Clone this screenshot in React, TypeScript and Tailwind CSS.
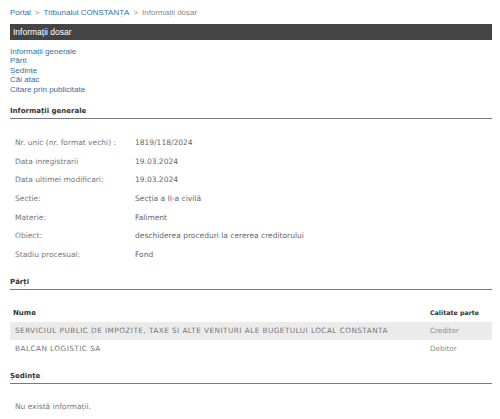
import React from 'react';

const rows: [string, string][] = [
  ['Nr. unic (nr. format vechi) :', '1819/118/2024'],
  ['Data inregistrarii', '19.03.2024'],
  ['Data ultimei modificari:', '19.03.2024'],
  ['Sectie:', 'Secția a II-a civilă'],
  ['Materie:', 'Faliment'],
  ['Obiect:', 'deschiderea proceduri la cererea creditorului'],
  ['Stadiu procesual:', 'Fond'],
];

const parti: [string, string][] = [
  ['SERVICIUL PUBLIC DE IMPOZITE, TAXE SI ALTE VENITURI ALE BUGETULUI LOCAL CONSTANTA', 'Creditor'],
  ['BALCAN LOGISTIC SA', 'Debitor'],
];

function SectionTitle({ children, className }: { children: React.ReactNode; className?: string }) {
  return (
    <div className={`pb-[1px] border-b border-[#7a7a7a] font-['DejaVu_Sans',sans-serif] font-bold text-[7px] leading-[12px] text-[#333] ${className ?? ''}`}>
      {children}
    </div>
  );
}

export default function App() {
  return (
    <div className="w-[500px] h-[419px] bg-white overflow-hidden">
      <div className="ml-[10px] w-[482px] pt-[8px]">
        {/* Breadcrumb */}
        <div className="h-[10px] leading-[10px] text-[8px] font-['Liberation_Sans',Arial,sans-serif] text-[#888]">
          <span className="text-[#2f6fae]">Portal</span>
          <span className="mx-[4px]">&gt;</span>
          <span className="text-[#2f6fae]">Tribunalul CONSTANȚA</span>
          <span className="mx-[4px]">&gt;</span>
          <span>Informații dosar</span>
        </div>

        {/* Title bar */}
        <div className="mt-[6px] h-[16px] bg-[#444] pl-[3px] leading-[16px] text-[8.5px] text-white font-['Liberation_Sans',Arial,sans-serif]">
          Informații dosar
        </div>

        {/* Anchors */}
        <div className="mt-[7px] flex flex-col text-[8px] leading-[9.4px] text-[#2f6fae] font-['Liberation_Sans',Arial,sans-serif]">
          <span>Informații generale</span>
          <span>Părți</span>
          <span>Ședințe</span>
          <span>Căi atac</span>
          <span>Citare prin publicitate</span>
        </div>

        <SectionTitle className="mt-[11px]">Informații generale</SectionTitle>

        <div className="mt-[15px] grid grid-cols-[125px_1fr] font-['DejaVu_Sans',sans-serif] text-[7.5px] leading-[18.66px]">
          {rows.map(([k, v]) => (
            <React.Fragment key={k}>
              <div className="pl-[5px] text-[#777]">{k}</div>
              <div className="text-[#666]">{v}</div>
            </React.Fragment>
          ))}
        </div>

        <SectionTitle className="mt-[11px]">Părți</SectionTitle>

        <div className="mt-[14px] font-['DejaVu_Sans',sans-serif] leading-[18.3px]">
          <div className="grid grid-cols-[1fr_62px] font-bold text-[#333]">
            <div className="pl-[3px] text-[7px]">Nume</div>
            <div className="text-[6.3px]">Calitate parte</div>
          </div>
          {parti.map(([n, c], i) => (
            <div key={n} className={`grid grid-cols-[1fr_62px] ${i === 0 ? 'bg-[#ebebeb]' : ''}`}>
              <div className="pl-[5px] whitespace-nowrap text-[7.3px] tracking-[0.45px] text-[#777]">{n}</div>
              <div className="text-[7.2px] text-[#8a8a8a]">{c}</div>
            </div>
          ))}
        </div>

        <SectionTitle className="mt-[11px]">Ședințe</SectionTitle>

        <div className="mt-[14px] pl-[5px] font-['DejaVu_Sans',sans-serif] text-[7.5px] leading-[18.66px] text-[#777]">
          Nu există informații.
        </div>
      </div>
    </div>
  );
}
